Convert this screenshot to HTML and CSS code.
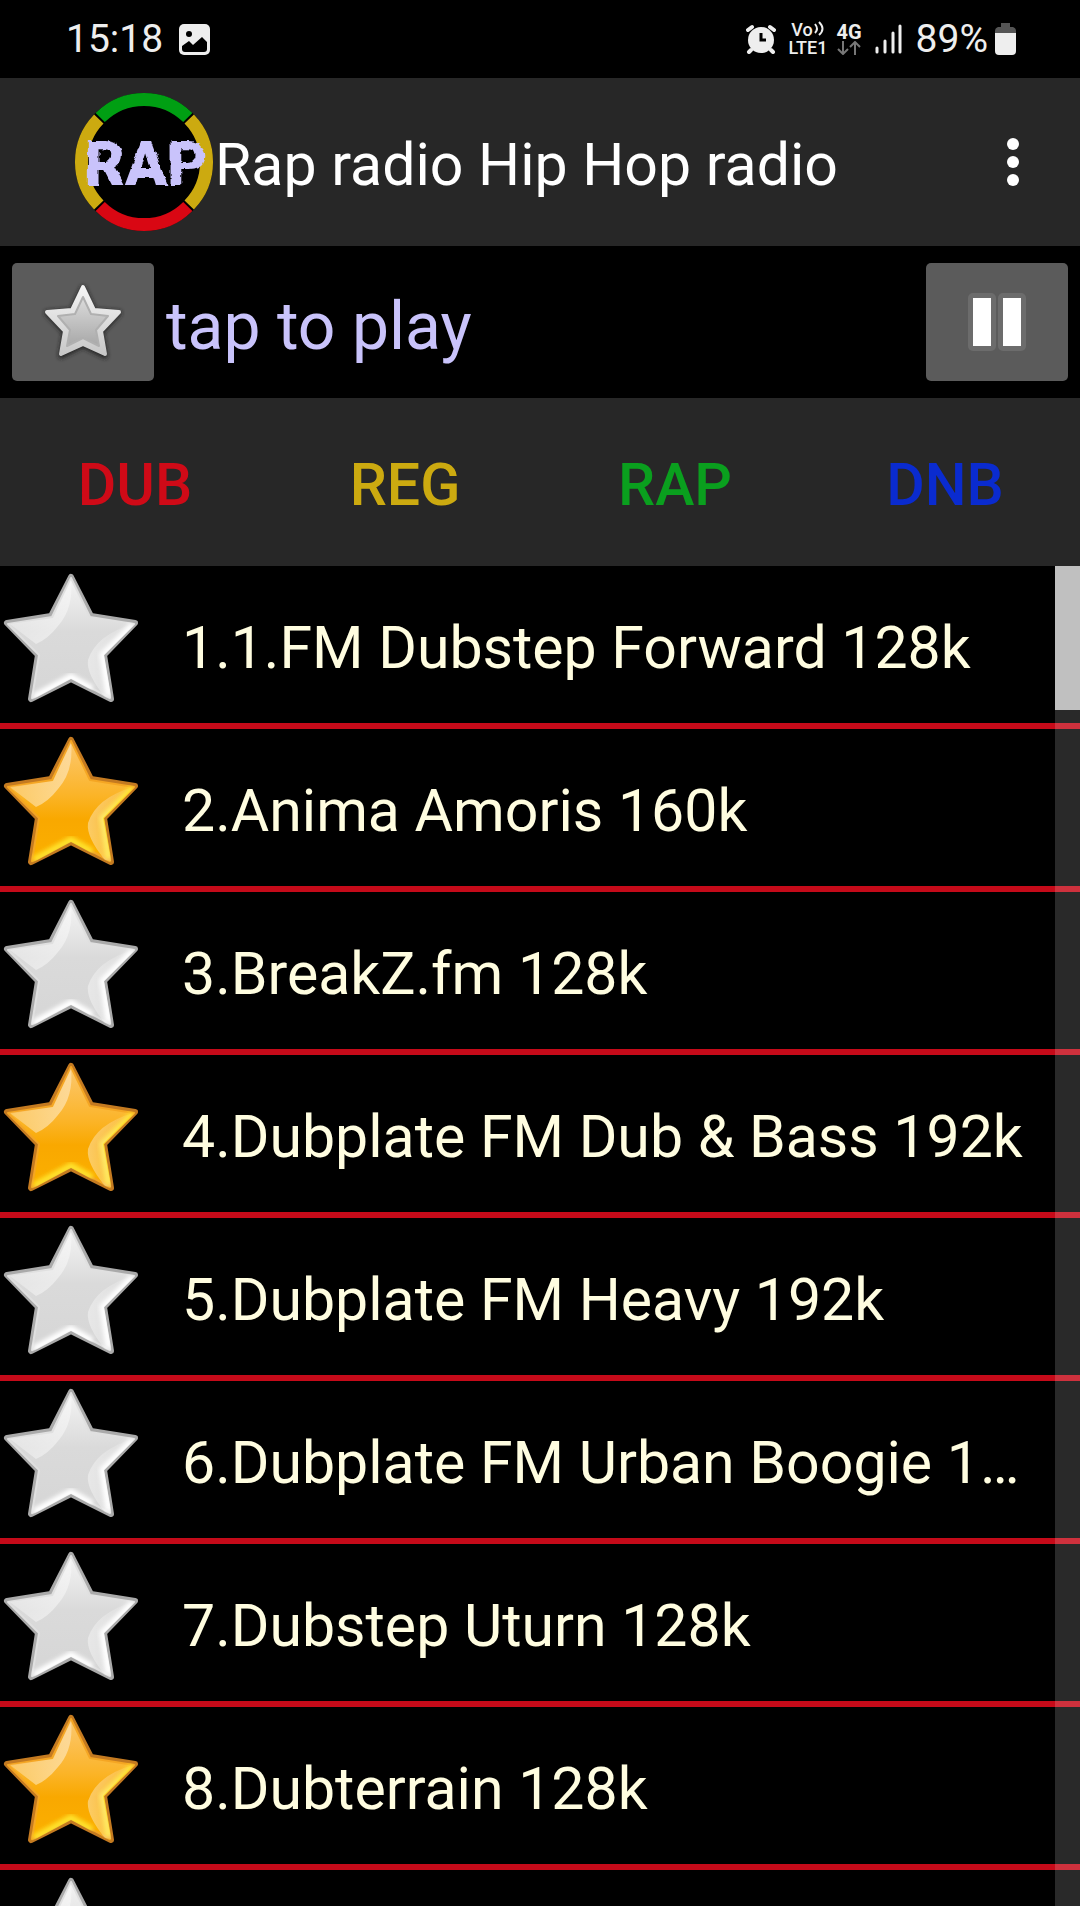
FILE: index.html
```html
<!DOCTYPE html>
<html lang="en">
<head>
<meta charset="utf-8">
<meta name="viewport" content="width=device-width, initial-scale=1">
<title>Rap radio Hip Hop radio</title>
<link rel="stylesheet" href="styles.css">
</head>
<body>
<svg class="defs" aria-hidden="true">
  <defs>
    <linearGradient id="silver" x1="0" y1="0" x2="0" y2="1"><stop offset="0" stop-color="#f4f4f4"/><stop offset=".45" stop-color="#dadada"/><stop offset="1" stop-color="#d6d6d6"/></linearGradient>
    <linearGradient id="gold" x1="0" y1="0" x2="0" y2="1"><stop offset="0" stop-color="#fcc870"/><stop offset=".45" stop-color="#fbb428"/><stop offset=".65" stop-color="#f9a800"/><stop offset="1" stop-color="#fbb000"/></linearGradient>
    <linearGradient id="gloss" x1="0" y1="0" x2="1" y2="1"><stop offset="0" stop-color="#fff" stop-opacity=".1"/><stop offset="1" stop-color="#fff" stop-opacity=".55"/></linearGradient>
    <linearGradient id="gloss-right" x1="0" y1="0" x2="1" y2="0"><stop offset="0" stop-color="#fff" stop-opacity=".4"/><stop offset="1" stop-color="#fff" stop-opacity=".05"/></linearGradient>
    <linearGradient id="button-star" x1="0" y1="0" x2="0" y2="1"><stop offset="0" stop-color="#dcdcdc"/><stop offset="1" stop-color="#a8a8a8"/></linearGradient>
    <linearGradient id="button-rim" x1="0" y1="0" x2="0" y2="1"><stop offset="0" stop-color="#f4f4f4"/><stop offset="1" stop-color="#c8c8c8"/></linearGradient>
    <filter id="soft" x="-20%" y="-20%" width="140%" height="140%"><feGaussianBlur stdDeviation="2"/></filter>
    <filter id="rough" x="-5%" y="-5%" width="110%" height="110%"><feTurbulence type="fractalNoise" baseFrequency=".12" numOctaves="2" seed="4"/><feDisplacementMap in="SourceGraphic" scale="5" xChannelSelector="R" yChannelSelector="G"/></filter>
    <clipPath id="star-clip"><path d="M71 9L91 50L136 57L104 89L112 135L71 113L30 135L38 89L6 57L51 50Z"/></clipPath>
    <symbol id="star" viewBox="0 0 144 144">
      <path class="star-edge" d="M71 11L91 50L135 57L104 89L111 133L71 113L31 133L38 89L7 57L51 50Z"/>
      <path class="star-body" d="M71 12L90 51L134 58L103 89L110 132L71 111L32 132L39 89L8 58L52 51Z"/>
      <g clip-path="url(#star-clip)">
        <path d="M71 13Q74 42 58 60Q48 73 36 78L10 58L53 52Z" fill="url(#gloss)"/>
        <path class="star-shine" d="M133 59L103 89L109 130" filter="url(#soft)"/>
        <path class="star-shine" d="M34 131L71 111L92 123" filter="url(#soft)"/>
        <path d="M133 58Q96 69 88 94Q86 108 105 131L111 132L103 89Z" fill="url(#gloss-right)"/>
      </g>
    </symbol>
  </defs>
</svg>
<div class="app">
  <div class="status">
    <span>15:18</span>
    <svg class="status-photo" width="31" height="31" viewBox="0 0 31 31"><rect width="31" height="31" rx="5" fill="#eee"/><circle cx="10" cy="10" r="3" fill="#000"/><path d="M3 22L10 17L14 21L23 13L28 18V25Q28 28 25 28H6Q3 28 3 25Z" fill="#000"/></svg>
    <div class="status-right">
      <svg width="30" height="30" viewBox="0 0 30 30" fill="none" stroke="#eee" stroke-linecap="round"><circle cx="15" cy="16" r="13" fill="#eee" stroke="none"/><path d="M2 6L6 3M28 6L24 3M5 26L3 28M25 26L27 28" stroke-width="4"/><path d="M15 9V16H20" stroke="#000" stroke-width="3" stroke-linecap="butt"/></svg>
      <div class="volte"><span>Vo<svg width="11" height="15" viewBox="0 0 11 15" fill="none" stroke="#eee" stroke-width="2"><path d="M1 3Q5 8 1 12M5 1Q12 8 5 14"/></svg></span><span>LTE1</span></div>
      <div class="network"><span>4G</span><svg width="24" height="14" viewBox="0 0 24 14" fill="none" stroke="#777" stroke-width="2"><path d="M6 0V13M1 8L6 13L11 8M18 14V1M13 6L18 1L23 6"/></svg></div>
      <svg class="signal" width="27" height="30" viewBox="0 0 27 30" stroke="#eee" stroke-width="3" stroke-linecap="round"><path d="M2 24V28M10 17V28M18 9V28M25 2V28"/></svg>
      <span class="percent">89%</span>
      <svg class="battery" width="21" height="32" viewBox="0 0 21 32"><path d="M6 0H15V4H18Q21 5 21 8V10H0V8Q0 5 3 4H6Z" fill="#555"/><path d="M0 10H21V28Q21 32 17 32H4Q0 32 0 28Z" fill="#eee"/></svg>
    </div>
  </div>

  <header class="appbar">
    <svg class="logo" width="140" height="140" viewBox="0 0 140 140" role="img" aria-label="RAP">
      <circle cx="70" cy="70" r="69" fill="#000"/>
      <g fill="none" stroke-width="13">
        <path d="M26.200 25.500A62 62 0 0 1 113.800 25.500" stroke="#009f13"/>
        <path d="M115.200 27A62 62 0 0 1 115.200 113" stroke="#ccaa10"/>
        <path d="M113.800 114.500A62 62 0 0 1 26.200 114.500" stroke="#d90713"/>
        <path d="M24.800 113A62 62 0 0 1 24.800 27" stroke="#ccaa10"/>
      </g>
      <text class="logo-text" x="72" y="93" text-anchor="middle" filter="url(#rough)">RAP</text>
    </svg>
    <h1>Rap radio Hip Hop radio</h1>
    <button class="menu" aria-label="More options"><svg width="14" height="50" viewBox="0 0 14 50" fill="#fff"><circle cx="7" cy="7" r="6"/><circle cx="7" cy="25" r="6"/><circle cx="7" cy="43" r="6"/></svg></button>
  </header>

  <section class="player">
    <button class="key" aria-label="Favourite">
      <svg width="84" height="84" viewBox="0 0 84 84" stroke-linejoin="round"><path d="M42 8L53 31L78 33L60 52L64 76L42 65L20 76L24 52L6 33L31 31Z" fill="#222" stroke="#222" stroke-width="5" filter="url(#soft)"/><path d="M42 7L53 30L78 32L60 51L64 74L42 64L20 74L24 51L6 32L31 30Z" fill="url(#button-rim)" stroke="url(#button-rim)" stroke-width="4"/><path d="M42 17L50 34L67 36L55 50L58 66L42 58L26 66L29 50L17 36L34 34Z" fill="url(#button-star)" stroke="#b0b0b0" stroke-width="2"/></svg>
    </button>
    <p>tap to play</p>
    <button class="key" aria-label="Pause">
      <svg width="58" height="58" viewBox="0 0 58 58"><g fill="#6c6c6c"><rect width="28" height="58" rx="5"/><rect x="30" width="28" height="58" rx="5"/></g><path d="M5 5H23V53H5ZM35 5H53V53H35Z" fill="#fff"/></svg>
    </button>
  </section>

  <nav class="tabs">
    <a class="dub" href="#dub">DUB</a>
    <a class="reg" href="#reg">REG</a>
    <a class="rap" href="#rap">RAP</a>
    <a class="dnb" href="#dnb">DNB</a>
  </nav>

  <main class="stations">
    <ul>
      <li><svg class="star"><use href="#star"/></svg><span>1.1.FM Dubstep Forward 128k</span></li>
      <li><svg class="star star-on"><use href="#star"/></svg><span>2.Anima Amoris 160k</span></li>
      <li><svg class="star"><use href="#star"/></svg><span>3.BreakZ.fm 128k</span></li>
      <li><svg class="star star-on"><use href="#star"/></svg><span>4.Dubplate FM Dub &amp; Bass 192k</span></li>
      <li><svg class="star"><use href="#star"/></svg><span>5.Dubplate FM Heavy 192k</span></li>
      <li><svg class="star"><use href="#star"/></svg><span>6.Dubplate FM Urban Boogie 1…</span></li>
      <li><svg class="star"><use href="#star"/></svg><span>7.Dubstep Uturn 128k</span></li>
      <li><svg class="star star-on"><use href="#star"/></svg><span>8.Dubterrain 128k</span></li>
      <li><svg class="star"><use href="#star"/></svg></li>
    </ul>
    <div class="scrollbar"><div class="thumb"></div></div>
  </main>
</div>
</body>
</html>
```
FILE: styles.css
```css
* { box-sizing: border-box; }
body {
  margin: 0;
  background: #000;
  color: #fff;
  font-family: Roboto, sans-serif;
}
button { border: 0; padding: 0; font: inherit; }
svg { display: block; flex: none; }
.defs { position: absolute; width: 0; height: 0; }
.app { display: flex; flex-direction: column; height: 100vh; overflow: hidden; }
.app > * { flex: none; }

/* status bar */
.status {
  display: flex;
  align-items: center;
  height: 78px;
  padding: 0 64px 0 66px;
  color: #eee;
  font-size: 39px;
}
.status-photo { margin-left: 16px; }
.status-right { display: flex; align-items: center; margin-left: auto; }
.volte, .network {
  display: flex;
  flex-direction: column;
  align-items: center;
  font-size: 18px;
  font-weight: 500;
  line-height: 18px;
}
.volte { margin-left: 13px; }
.volte span { display: flex; gap: 1px; }
.network { margin-left: 9px; font-size: 20px; font-weight: 700; }
.signal { margin-left: 13px; }
.percent { margin-left: 14px; }
.battery { margin-left: 7px; }

/* title bar */
.appbar {
  display: flex;
  align-items: center;
  height: 168px;
  padding: 0 60px 0 74px;
  background: #272727;
}
.logo-text {
  fill: #c9c3fb;
  font-family: Roboto, sans-serif;
  font-size: 62px;
  font-weight: 900;
}
h1 { flex: 1; margin: 0; padding: 4px 0 0 1px; font-size: 59px; font-weight: 400; }
.menu { background: none; }

/* player */
.player {
  display: flex;
  align-items: center;
  gap: 12px;
  height: 152px;
  padding: 0 12px;
}
.player p { flex: 1; margin: 0; padding-top: 8px; color: #c9c3fb; font-size: 66px; }
.key {
  display: flex;
  align-items: center;
  justify-content: center;
  width: 142px;
  height: 118px;
  border-radius: 5px;
  background: #5b5b5b;
}

/* genre tabs */
.tabs {
  display: grid;
  grid-template-columns: repeat(4, 1fr);
  align-items: center;
  height: 168px;
  padding-top: 4px;
  background: #272727;
  font-size: 59px;
  font-weight: 500;
  text-align: center;
}
.tabs a { text-decoration: none; }
.dub { color: #cf0a17; }
.reg { color: #ccaa10; }
.rap { color: #0a9f1e; }
.dnb { color: #0a2bcf; }

/* station list */
.app .stations { position: relative; flex: 1; min-height: 0; overflow: hidden; }
.stations ul { margin: 0; padding: 0; list-style: none; }
.stations li {
  display: flex;
  gap: 38px;
  height: 163px;
  border-bottom: 6px solid #c50a19;
  color: #fffde0;
  font-size: 59px;
  line-height: 163px;
  white-space: nowrap;
}
.star {
  --edge: #aaa;
  --body: url(#silver);
  --rim: #e0e0e0;
  --shine: #fff;
  width: 144px;
  height: 144px;
}
.star-on {
  --edge: #c47a20;
  --body: url(#gold);
  --rim: #f5a623;
  --shine: #ffe32a;
}
.star-edge { fill: var(--edge); stroke: var(--edge); stroke-width: 6; stroke-linejoin: round; }
.star-body { fill: var(--body); stroke: var(--rim); stroke-width: 2; stroke-linejoin: round; }
.star-shine { fill: none; stroke: var(--shine); stroke-width: 7; }
.scrollbar {
  position: absolute;
  top: 0;
  right: 0;
  bottom: 0;
  width: 25px;
  background: rgba(255, 255, 255, .16);
}
.thumb { height: 144px; background: #c0c0c0; }
```
